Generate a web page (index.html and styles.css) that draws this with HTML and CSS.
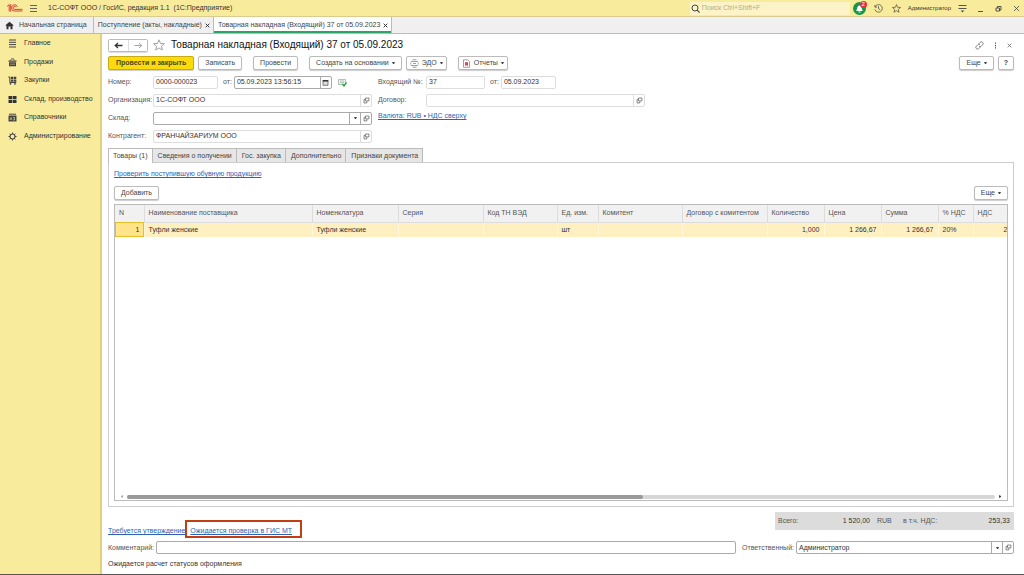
FILE: index.html
```html
<!DOCTYPE html>
<html lang="ru">
<head>
<meta charset="utf-8">
<title>Товарная накладная (Входящий) 37 от 05.09.2023</title>
<link rel="stylesheet" href="styles.css">
</head>
<body>
<svg class="defs" aria-hidden="true">
  <symbol id="open" viewBox="0 0 10 10"><path d="M3.500 1.500h5v4h-5zM3 3.500H1.500v5h4V6" fill="none" stroke="#555" stroke-width="1"/></symbol>
  <symbol id="star" viewBox="0 0 12 12"><path d="M6 .8l1.500 3.600 3.900.3-3 2.500 1 3.800L6 9l-3.400 2 1-3.800-3-2.500 3.900-.3z" fill="none" stroke="currentColor" stroke-width=".9"/></symbol>
</svg>

<header class="titlebar">
  <svg class="logo" viewBox="0 0 17 10"><path d="M1 3.600L3.200 1.600V8.600M4.700 1.200v7.400M11.500 3.800A3.100 3.100 0 1 0 8.700 8H16.500M10 4.300A1.500 1.500 0 1 0 8.700 6.400H16.500" fill="none" stroke="#d9302c" stroke-width=".9"/></svg>
  <button class="plain" aria-label="Меню"><svg class="i9" viewBox="0 0 9 9"><path d="M1 1.500h7M1 4.500h7M1 7.500h7" stroke="#555" stroke-width=".9"/></svg></button>
  <span class="app-name">1С-СОФТ ООО / ГосИС, редакция 1.1 &nbsp;(1С:Предприятие)</span>
  <label class="search">
    <svg class="i9" viewBox="0 0 9 9"><circle cx="4" cy="4" r="3" fill="none" stroke="#444"/><path d="M6.200 6.200l2.400 2.400" stroke="#444" stroke-width="1.200"/></svg>
    <input type="search" placeholder="Поиск Ctrl+Shift+F" aria-label="Поиск">
  </label>
  <button class="plain bell" aria-label="Уведомления"><svg class="i13" viewBox="0 0 13 13"><circle cx="6.500" cy="6.500" r="6.500" fill="#0e9a4c"/><path d="M3 9c1.400-1.200.8-5.500 3.500-5.500S8.600 7.800 10 9zM5.500 9.600h2v1h-2z" fill="#fff"/></svg><span class="badge">2</span></button>
  <button class="plain" aria-label="История"><svg class="i9" viewBox="0 0 10 10"><path d="M1.200 3.200A4.200 4.200 0 1 1 1 6M1 1v2.500h2.500M5 2.500V5.300l2 1.200" fill="none" stroke="#555" stroke-width=".9"/></svg></button>
  <button class="plain" aria-label="Избранное"><svg class="i9"><use href="#star"/></svg></button>
  <a class="user" href="#">Администратор</a>
  <button class="plain" aria-label="Настройки"><svg class="i9" viewBox="0 0 9 9"><path d="M.5 1.500h8M.5 4.500h8" stroke="#555"/><path d="M2.800 6.500h3.400L4.500 8.500z" fill="#444"/></svg></button>
  <div class="window-buttons">
    <button class="plain" aria-label="Свернуть"><svg class="i7" viewBox="0 0 7 7"><path d="M1 6.500h5" stroke="#555"/></svg></button>
    <button class="plain" aria-label="Восстановить"><svg class="i7" viewBox="0 0 7 7"><path d="M1 3h3.500v3H1zM2.500 3V1.500H6V5H4.500" fill="none" stroke="#444" stroke-width=".9"/></svg></button>
    <button class="plain" aria-label="Закрыть"><svg class="i7" viewBox="0 0 7 7"><path d="M1 1l5 5M6 1L1 6" stroke="#444" stroke-width=".8"/></svg></button>
  </div>
</header>

<nav class="window-tabs">
  <a class="home" href="#"><svg class="i9" viewBox="0 0 9 9"><path d="M4.500.8L8.300 4v.8H7.500V8.300H5.500V5.500h-2v2.800h-2V4.800H.7V4z" fill="#333"/></svg>Начальная страница</a>
  <a href="#">Поступление (акты, накладные) <svg class="i5" viewBox="0 0 5 5"><path d="M.7.7l3.600 3.600M4.300.7L.7 4.300" stroke="#333" stroke-width="1"/></svg></a>
  <a class="active" href="#">Товарная накладная (Входящий) 37 от 05.09.2023 <svg class="i5" viewBox="0 0 5 5"><path d="M.7.7l3.600 3.600M4.300.7L.7 4.300" stroke="#333" stroke-width="1"/></svg></a>
</nav>

<div class="workspace">
  <nav class="sidebar">
    <a href="#"><svg class="i9" viewBox="0 0 9 9"><path d="M1 1h7M1 3.300h7M1 5.600h7M1 8h7" stroke="#444"/></svg>Главное</a>
    <a href="#"><svg class="i9" viewBox="0 0 9 9"><path d="M1 4.200h7V8.300H1zM.5 2.500h8v1.300h-8z" fill="#444"/><path d="M2.500 2.500L3.500.8h2l1 1.700" fill="none" stroke="#444" stroke-width=".8"/><path d="M2 6.200h5" stroke="#f9eb9c" stroke-width=".5"/></svg>Продажи</a>
    <a href="#"><svg class="i9" viewBox="0 0 9 9"><path d="M.3 1h1.500v5.500h6.500" fill="none" stroke="#444"/><path d="M2.800.8h2.500v2.300H2.800zM5.800.8h2.500v2.300H5.800zM2.800 3.500h2.500v2.300H2.800zM5.800 3.500h2.500v2.300H5.800z" fill="#444"/><circle cx="2.500" cy="7.800" r=".9" fill="#444"/><circle cx="7" cy="7.800" r=".9" fill="#444"/></svg>Закупки</a>
    <a href="#"><svg class="i9" viewBox="0 0 9 9"><path d="M.5 1h3.700v3.200H.5zM4.800 1h3.700v3.200H4.800zM.5 4.900h3.700v3.200H.5zM4.800 4.900h3.700v3.200H4.800z" fill="#333"/></svg>Склад, производство</a>
    <a href="#"><svg class="i9" viewBox="0 0 9 9"><path d="M.5 2.500h8v6h-8z" fill="#444"/><path d="M1 1.200h7" stroke="#444"/><path d="M2 7l1-2.500L4 7M5 4.500h1.500v2.500H5" fill="none" stroke="#f9eb9c" stroke-width=".6"/></svg>Справочники</a>
    <a href="#"><svg class="i9" viewBox="0 0 9 9"><circle cx="4.500" cy="4.500" r="2.500" fill="none" stroke="#444" stroke-width="1.100"/><path d="M4.500.5v1.500M4.500 7v1.500M.5 4.500H2M7 4.500h1.500M1.700 1.700l1 1M6.300 6.300l1 1M1.700 7.300l1-1M6.300 2.700l1-1" stroke="#444"/></svg>Администрирование</a>
  </nav>

  <main class="document">
    <div class="heading">
      <div class="history">
        <button aria-label="Назад"><svg class="i9" viewBox="0 0 9 9"><path d="M8.500 4.500h-7M4 2L1.200 4.500 4 7" fill="none" stroke="#333" stroke-width="1.300"/></svg></button>
        <button aria-label="Вперед"><svg class="i9" viewBox="0 0 9 9"><path d="M.5 4.500h7M5 2l2.800 2.500L5 7" fill="none" stroke="#999" stroke-width=".9"/></svg></button>
      </div>
      <button class="plain favorite" aria-label="В избранное"><svg class="i12"><use href="#star"/></svg></button>
      <h1>Товарная накладная (Входящий) 37 от 05.09.2023</h1>
      <div class="heading-tools">
        <button class="plain" aria-label="Ссылка"><svg class="i9" viewBox="0 0 9 9"><path d="M3.800 2.800L5.300 1.300a1.700 1.700 0 0 1 2.400 2.400L6 5.400a1.500 1.500 0 0 1-2 0M5.200 6.200L3.700 7.700a1.700 1.700 0 0 1-2.400-2.400L3 3.600a1.500 1.500 0 0 1 2 0" fill="none" stroke="#666" stroke-width=".8"/></svg></button>
        <button class="plain" aria-label="Еще"><svg class="i7" viewBox="0 0 7 7"><path d="M3 .5h1v1.300H3zM3 2.900h1v1.300H3zM3 5.300h1v1.300H3z" fill="#444"/></svg></button>
        <button class="plain" aria-label="Закрыть"><svg class="i5" viewBox="0 0 5 5"><path d="M.7.7l3.600 3.600M4.300.7L.7 4.300" stroke="#666" stroke-width=".8"/></svg></button>
      </div>
    </div>

    <div class="commands">
      <button class="btn primary">Провести и закрыть</button>
      <button class="btn">Записать</button>
      <button class="btn gap-wide">Провести</button>
      <button class="btn gap-wide">Создать на основании<i class="caret"></i></button>
      <button class="btn tight"><svg class="i9" viewBox="0 0 9 9"><path d="M2.500.8h4M2.500 8.200h4M1 2.500h7M1 6.500h7M3 4.500h3M.8 3.500v2M8.200 3.500v2" stroke="#888" stroke-width=".8"/></svg>ЭДО<i class="caret"></i></button>
      <button class="btn tight gap-wide"><svg class="i9" viewBox="0 0 9 9"><path d="M1.500.8h4.300l1.700 1.700v5.800h-6z" fill="#fff" stroke="#888" stroke-width=".8"/><path d="M3 3.200h3v3.300H3z" fill="#d94a4a"/><path d="M5.500 4.500v2" stroke="#393" stroke-width=".8"/></svg>Отчеты<i class="caret"></i></button>
      <button class="btn more">Еще<i class="caret"></i></button>
      <button class="btn help">?</button>
    </div>

    <div class="fields">
      <label for="num">Номер:</label>
      <div class="line">
        <input class="box w-num" id="num" value="0000-000023">
        <label for="date">от:</label>
        <div class="combo strong w-date"><input id="date" value="05.09.2023 13:56:15"><button aria-label="Календарь"><svg class="i7" viewBox="0 0 7 7"><path d="M1 1.500h5v4.800H1z" fill="#ddd" stroke="#555" stroke-width=".7"/><path d="M.7 1.800h5.600" stroke="#333" stroke-width="1.500"/></svg></button></div>
        <svg class="i9 posted" viewBox="0 0 9 9"><path d="M.5 1.500h7v5h-7z" fill="#eef3ee" stroke="#9aa89a" stroke-width=".7"/><path d="M2 3h4M2 4.500h4" stroke="#9aa89a" stroke-width=".6"/><path d="M4.500 6l1.500 2 2.500-3.500" fill="none" stroke="#27a844" stroke-width="1.300"/></svg>
      </div>
      <label class="second" for="innum">Входящий №:</label>
      <div class="line">
        <input class="box w-in" id="innum" value="37">
        <label for="indate">от:</label>
        <input class="box w-indate" id="indate" value="05.09.2023">
      </div>

      <label for="org">Организация:</label>
      <div class="combo"><input id="org" value="1С-СОФТ ООО"><button aria-label="Открыть"><svg class="i7"><use href="#open"/></svg></button></div>
      <label class="second" for="contract">Договор:</label>
      <div class="combo"><input id="contract"><button aria-label="Открыть"><svg class="i7"><use href="#open"/></svg></button></div>

      <label for="store">Склад:</label>
      <div class="combo strong"><select id="store"><option></option></select><span class="drop"><i class="caret"></i></span><button aria-label="Открыть"><svg class="i7"><use href="#open"/></svg></button></div>
      <a class="link currency" href="#">Валюта: RUB • НДС сверху</a>

      <label class="first" for="partner">Контрагент:</label>
      <div class="combo"><input id="partner" value="ФРАНЧАЙЗАРИУМ ООО"><button aria-label="Открыть"><svg class="i7"><use href="#open"/></svg></button></div>
    </div>

    <div class="pages" role="tablist">
      <button role="tab" aria-selected="true">Товары (1)</button>
      <button role="tab">Сведения о получении</button>
      <button role="tab">Гос. закупка</button>
      <button role="tab">Дополнительно</button>
      <button role="tab">Признаки документа</button>
    </div>

    <section class="panel">
      <div><a class="link" href="#">Проверить поступившую обувную продукцию</a></div>
      <div class="table-tools"><button class="btn">Добавить</button><button class="btn more">Еще<i class="caret"></i></button></div>
      <div class="grid">
        <table>
          <colgroup><col class="c29"><col class="c168"><col class="c86"><col class="c85"><col class="c74"><col class="c41"><col class="c84"><col class="c85"><col class="c57"><col class="c57"><col class="c57"><col class="c35"><col class="c35"></colgroup>
          <thead><tr><th>N</th><th>Наименование поставщика</th><th>Номенклатура</th><th>Серия</th><th>Код ТН ВЭД</th><th>Ед. изм.</th><th>Комитент</th><th>Договор с комитентом</th><th>Количество</th><th>Цена</th><th>Сумма</th><th>% НДС</th><th>НДС</th></tr></thead>
          <tbody><tr><td class="current">1</td><td>Туфли женские</td><td>Туфли женские</td><td></td><td></td><td>шт</td><td></td><td></td><td class="n">1,000</td><td class="n">1 266,67</td><td class="n">1 266,67</td><td>20%</td><td class="n cut">2</td></tr></tbody>
        </table>
        <div class="scroll"><i class="arrow-left"></i><div class="track"><div class="thumb"></div></div><i class="arrow-right"></i></div>
      </div>
    </section>

    <div class="summary">
      <div class="states"><a class="link" href="#">Требуется утверждение</a><span class="marked"><a class="link" href="#">Ожидается проверка в ГИС МТ</a></span></div>
      <div class="totals"><span>Всего:</span><b>1 520,00</b><span>RUB</span><span>в т.ч. НДС:</span><b>253,33</b></div>
    </div>

    <div class="footer">
      <label for="comment">Комментарий:</label>
      <input class="box strong comment" id="comment">
      <label for="owner">Ответственный:</label>
      <div class="combo strong owner"><select id="owner"><option>Администратор</option></select><span class="drop"><i class="caret"></i></span><button aria-label="Открыть"><svg class="i7"><use href="#open"/></svg></button></div>
    </div>
    <p class="status">Ожидается расчет статусов оформления</p>
  </main>
</div>
</body>
</html>
```

FILE: styles.css
```css
* { box-sizing: border-box; }
body {
  margin: 0;
  min-height: 100vh;
  display: flex;
  flex-direction: column;
  font: 7px/10px "Liberation Sans", Arial, sans-serif;
  color: #333;
  background: #fff;
  border-bottom: 1px solid #555;
}
.defs { position: absolute; width: 0; height: 0; }
svg { flex: none; display: block; }
.i5 { width: 5px; height: 5px; }
.i7 { width: 7px; height: 7px; }
.i9 { width: 9px; height: 9px; }
.i12 { width: 12px; height: 12px; }
.i13 { width: 13px; height: 13px; }
a { color: inherit; text-decoration: none; }
button, input, select { font: inherit; color: inherit; margin: 0; padding: 0; min-width: 0; }
button { white-space: nowrap; }
label { color: #555; white-space: nowrap; }
.plain { border: 0; background: none; display: flex; color: #444; }
.caret { border: 1px solid transparent; border-top: 2px solid #444; border-bottom: 0; width: 3px; height: 2px; }
.link { color: #2f62b5; text-decoration: underline; }

.titlebar {
  display: flex;
  align-items: center;
  height: 17px;
  padding: 0 4px 0 6px;
  background: #f9eb9c;
  border-bottom: 1px solid #d8cc90;
}
.logo { width: 17px; height: 10px; margin-right: 6px; }
.app-name { margin-left: 10px; flex: 1; }
.search { display: flex; align-items: center; gap: 2px; width: 160px; height: 13px; padding-left: 1px; background: #fcf3c6; margin-right: 3px; }
.search input { border: 0; background: none; flex: 1; outline: 0; }
.search input::placeholder { color: #b5ad8c; opacity: 1; }
.bell { position: relative; margin-right: 8px; }
.badge { position: absolute; top: -1px; right: -1px; width: 7px; height: 7px; border-radius: 4px; background: #e5303a; color: #fff; font-size: 6px; line-height: 7px; text-align: center; }
.titlebar > .plain + .plain { margin-right: 9px; }
.titlebar > .plain + .plain:has(+ .user) { margin-right: 7px; }
.user { font-size: 6px; margin-right: 7px; }
.window-buttons { display: flex; gap: 11px; margin-left: 10px; }

.window-tabs { display: flex; height: 17px; background: #f0f0f0; border-bottom: 1px solid #bbb; }
.window-tabs a { display: flex; align-items: center; gap: 3px; padding: 0 3px 0 4px; border-right: 1px solid #bbb; color: #444; white-space: nowrap; }
.window-tabs .home { gap: 5px; padding: 0 6px 0 5px; }
.window-tabs .active { background: #fff; box-shadow: inset 0 -2px #2aa567; }

.workspace { flex: 1; display: flex; }
.sidebar { width: 102px; flex: none; background: #f9eb9c; border-right: 2px solid #e2d07c; }
.sidebar a { display: flex; align-items: center; gap: 7px; padding-left: 8px; height: 18px; margin-bottom: 1px; white-space: nowrap; }
.sidebar a:nth-child(2n) { margin-bottom: 0; }

.document { flex: 1; min-width: 0; display: flex; flex-direction: column; padding: 4px 10px 5px 6px; }
.heading { display: flex; align-items: center; height: 14px; }
.history { display: flex; border: 1px solid #bbb; border-radius: 2px; height: 13px; box-shadow: 0 1px 1px #ddd; }
.history button { width: 19px; border: 0; background: #fff; display: grid; place-items: center; }
.history button + button { border-left: 1px solid #ddd; }
.favorite { color: #999; margin: 0 6px 0 5px; }
h1 { margin: 0; font-size: 10px; line-height: 14px; font-weight: 400; color: #111; flex: 1; }
.heading-tools { display: flex; align-items: center; gap: 8px; margin-right: 2px; }

.commands { display: flex; margin-top: 4px; gap: 4px; }
.btn { height: 14px; padding: 0 6px; border: 1px solid #bbb; border-radius: 2px; background: #fff; box-shadow: 0 1px 1px #ccc; display: flex; align-items: center; gap: 3px; color: #444; }
.tight { padding: 0 3px; }
.gap-wide { margin-left: 7px; }
.primary { padding: 0 7px; background: #fcdb0c; border-color: #c9aa13; font-weight: 700; color: #4f4718; }
.more { margin-left: auto; }
.help { padding: 0 5px; font-weight: 700; }

.fields { display: grid; grid-template-columns: 45px 219px 54px 219px; grid-auto-rows: 14px; row-gap: 4px; align-items: center; margin-top: 5px; }
.second { padding-left: 6px; }
.first { grid-column: 1; }
.line { display: flex; align-items: center; gap: 5px; }
.box, .combo { height: 13px; border: 1px solid #ddd; border-radius: 2px; background: #fff; }
.box { padding: 0 2px 1px; }
.box.strong, .combo.strong { border-color: #aaa; }
.w-num { width: 65px; }
.w-date { width: 98px; margin-left: -3px; }
.w-in { width: 59px; }
.w-indate { width: 55px; margin-left: -3px; }
.posted { margin-left: 1px; }
.combo { display: flex; position: relative; }
.combo input, .combo select { flex: 1; border: 0; background: none; padding: 0 2px; outline: 0; }
.combo select { appearance: none; padding-right: 12px; }
.combo button { width: 11px; border: 0; border-left: 1px solid #ddd; background: none; display: grid; place-items: center; }
.combo.strong button { border-color: #aaa; }
.drop { position: absolute; right: 11px; top: 0; bottom: 0; width: 11px; border-left: 1px solid #aaa; display: grid; place-items: center; pointer-events: none; }
.currency { grid-column: 3 / 5; padding-left: 6px; align-self: start; }

.pages { display: flex; margin-top: 5px; }
.pages button { height: 14px; padding: 0 5px; border: 1px solid #bbb; border-left-width: 0; border-bottom: 0; background: #e6e6e6; color: #444; }
.pages button + button { padding-right: 4px; }
.pages button:first-child { padding: 0 4px; border-left-width: 1px; background: #fff; height: 15px; margin-bottom: -1px; position: relative; }
.panel { flex: 1; display: flex; flex-direction: column; border: 1px solid #ccc; padding: 6px 5px 5px; }
.table-tools { display: flex; margin-top: 7px; }
.grid { flex: 1; display: flex; flex-direction: column; margin-top: 4px; border: 1px solid #bbb; overflow: hidden; }
table { width: 100%; table-layout: fixed; border-collapse: collapse; }
.c29 { width: 29px; } .c35 { width: 35px; } .c41 { width: 41px; } .c57 { width: 57px; }
.c74 { width: 74px; } .c84 { width: 84px; } .c85 { width: 85px; } .c86 { width: 86px; } .c168 { width: 168px; }
th, td { padding: 0 4px; text-align: left; font-weight: 400; white-space: nowrap; overflow: hidden; }
th { height: 17px; background: #f1f1f1; color: #555; border-right: 1px solid #ddd; border-bottom: 1px solid #ddd; }
td { height: 15px; background: #fff0c2; border-right: 1px solid #fff6dc; }
.n { text-align: right; }
td.cut { padding: 0; }
td.current { text-align: right; background: #ffe48a; outline: 1px solid #e8bd25; outline-offset: -1px; }
.scroll { margin-top: auto; height: 7px; display: flex; align-items: center; gap: 4px; padding: 0 5px; }
.track { flex: 1; height: 4px; background: #d6d6d6; border-radius: 2px; }
.thumb { width: 59.5%; height: 4px; background: #999; border-radius: 2px; }
.arrow-left, .arrow-right { border: 1px solid transparent; width: 3px; height: 3px; }
.arrow-left { border-right: 2px solid #aaa; border-left: 0; }
.arrow-right { border-left: 2px solid #444; border-right: 0; }

.summary { display: flex; justify-content: space-between; align-items: flex-start; margin-top: 5px; }
.states { display: flex; align-items: flex-end; margin-top: 8px; }
.states > .link { padding-bottom: 2px; }
.marked { border: 2px solid #c43e14; padding: 4px 8px 0 3px; }
.totals { display: grid; grid-template-columns: 40px 52px 27px 50px 1fr; align-items: center; height: 18px; padding: 0 4px 0 3px; width: 239px; background: #dcdcdc; color: #555; }
.totals b { font-weight: 400; color: #333; text-align: right; }
.totals b + span { padding-left: 7px; }
.totals span + span { padding-left: 6px; }
.footer { display: flex; align-items: center; margin-top: 3px; gap: 2px; }
.comment { flex: 582; }
.comment + label { margin-left: 4px; }
.owner { flex: 219; }
.status { margin: 5px 0 0; }
```
